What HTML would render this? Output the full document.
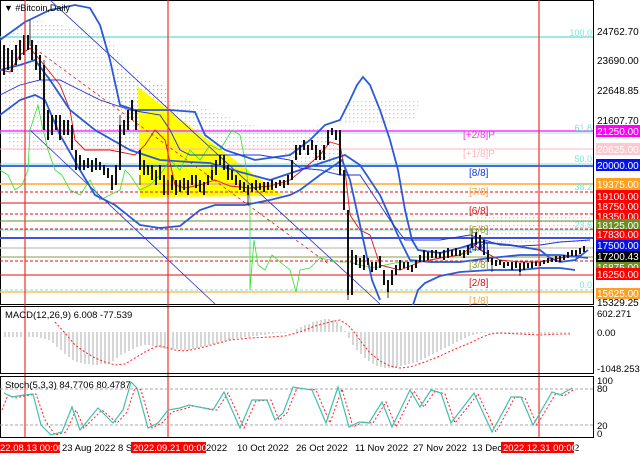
<!DOCTYPE html>
<html><head><meta charset="utf-8"><style>
html,body{margin:0;padding:0;background:#fff;}
svg{display:block;font-family:"Liberation Sans",sans-serif;}
</style></head><body>
<svg width="640" height="457" viewBox="0 0 640 457" xmlns="http://www.w3.org/2000/svg">
<defs>
<pattern id="pk" width="4" height="4" patternUnits="userSpaceOnUse"><rect x="1" y="1" width="1.2" height="1.2" fill="#d9a6c8"/></pattern>
<pattern id="or" width="4" height="4" patternUnits="userSpaceOnUse"><rect x="1" y="1" width="1.2" height="1.2" fill="#f0a060"/></pattern>
</defs>
<rect width="640" height="457" fill="#fff"/>
<!-- main panel -->
<rect x="0.5" y="0.5" width="593" height="304" fill="#fff" stroke="#000"/>
<!-- cloud -->
<path d="M0,60 L10,30 L35,20 L60,25 L90,30 L110,35 L130,75 L150,105 L190,100 L210,110 L250,125 L290,130 L320,125 L340,150 L345,175 L300,170 L280,150 L250,150 L200,150 L150,150 L120,150 L60,150 L10,150 Z" fill="url(#pk)" opacity="0.8"/>
<path d="M85,95 L120,65 L145,80 L165,85 L175,115 L185,125 L160,130 L150,145 L100,150 L85,130 Z" fill="url(#or)"/>
<path d="M345,100 L420,100 L415,120 L345,125 Z" fill="url(#pk)" opacity="0.7"/>
<path d="M475,213 L590,213 L590,245 L475,245 Z" fill="url(#pk)" opacity="0.7"/>
<!-- yellow triangle -->
<polygon points="138,87 252,173 283,196 140,197" fill="#ffff00"/>
<!-- horizontal levels -->
<g stroke-width="1">
<line x1="0" y1="37" x2="593" y2="37" stroke="#7fe3da" stroke-width="1.5"/>
<line x1="0" y1="131" x2="593" y2="131" stroke="#ff33ff" stroke-width="1.5"/>
<line x1="0" y1="133" x2="593" y2="133" stroke="#9ee8e0"/>
<line x1="0" y1="149" x2="593" y2="149" stroke="#ffb6c1"/>
<line x1="0" y1="164" x2="593" y2="164" stroke="#7fe3da"/>
<line x1="0" y1="166" x2="593" y2="166" stroke="#1030e0" stroke-width="1.5"/>
<line x1="0" y1="184" x2="593" y2="184" stroke="#ffbf60" stroke-width="2"/>
<line x1="0" y1="192" x2="593" y2="192" stroke="#e01010" stroke-dasharray="3,2"/>
<line x1="0" y1="203" x2="593" y2="203" stroke="#e01010"/>
<line x1="0" y1="214" x2="593" y2="214" stroke="#e01010" stroke-dasharray="3,2"/>
<line x1="0" y1="221" x2="593" y2="221" stroke="#6b8e23"/>
<line x1="0" y1="229" x2="593" y2="229" stroke="#e01010" stroke-dasharray="3,2"/>
<line x1="0" y1="230" x2="593" y2="230" stroke="#7fe3da"/>
<line x1="0" y1="238" x2="593" y2="238" stroke="#4050e0" stroke-width="2"/>
<line x1="0" y1="248" x2="593" y2="248" stroke="#cccccc" stroke-width="1.5"/>
<line x1="0" y1="257" x2="593" y2="257" stroke="#8a9a50"/>
<line x1="0" y1="261" x2="593" y2="261" stroke="#e01010" stroke-dasharray="3,2"/>
<line x1="0" y1="275" x2="593" y2="275" stroke="#e01010"/>
<line x1="0" y1="290" x2="593" y2="290" stroke="#7fe3da" stroke-dasharray="3,2"/>
<line x1="0" y1="292" x2="593" y2="292" stroke="#ffbf60" stroke-width="1.5"/>
</g>
<!-- diagonal channel lines -->
<line x1="50" y1="0" x2="380" y2="304" stroke="#2030d0" stroke-width="0.8"/>
<line x1="30" y1="130" x2="215" y2="304" stroke="#2030d0" stroke-width="0.8"/>
<line x1="30" y1="45" x2="330" y2="265" stroke="#e02020" stroke-width="0.8" stroke-dasharray="3,3"/>
<!-- green chikou -->
<polyline fill="none" stroke="#30e030" stroke-width="0.8" points="0,170 8,175 15,190 22,185 28,170 30,130 38,105 42,125 48,150 55,170 62,175 70,190 80,195 90,180 100,200 110,195 120,190 125,170 130,175 140,190 150,185 160,175 170,160 180,170 190,150 200,160 210,145 220,150 232,130 240,135 245,160 250,200 250,290 254,240 258,265 265,270 272,255 280,262 290,270 296,292 300,270 310,268 320,258 330,260 340,262 350,262 360,265 375,268 385,265 400,262 420,262 440,258 460,255 475,250"/>
<!-- red tenkan/kijun -->
<polyline fill="none" stroke="#e01010" stroke-width="0.9" points="0,70 10,72 20,55 30,48 40,60 60,85 70,110 75,140 85,150 110,150 120,152 135,155 145,145 155,130 165,140 175,185 185,188 200,185 215,180 230,186 250,188 270,186 290,180 300,172 320,155 330,142 340,145 345,170 350,215 360,230 370,235 380,265 400,270 420,262 440,258 460,255 475,245 480,250 500,260 520,262 540,262 560,258 580,255"/>
<!-- bollinger bands -->
<g fill="none" stroke="#2a5ad8" stroke-width="1.8">
<polyline points="0,40 25,22 50,10 75,5 90,8 100,25 110,60 120,105 135,110 170,110 195,112 205,135 225,150 255,160 290,155 310,140 325,125 340,120 350,100 357,85 363,77 370,85 380,110 390,140 398,170 405,210 412,240 418,250 440,253 460,248 480,242 510,245 540,250 550,258 560,262 575,260 588,250"/>
<polyline points="0,70 20,65 35,60 50,80 70,110 95,130 130,150 160,160 190,162 210,163 240,172 270,180 300,170 330,160 345,155 360,165 380,195 400,240 410,260 430,262 460,262 490,258 520,255 560,255 588,258"/>
<polyline points="0,115 20,100 35,95 45,100 60,135 80,170 95,195 115,205 140,225 160,228 180,226 200,210 215,205 245,205 270,200 290,195 300,190 320,175 335,165 342,160 350,180 360,225 372,280 380,300"/>
<polyline points="413,305 418,290 425,283 440,276 460,272 490,270 520,270 540,268 560,268 575,270"/>
</g>
<polyline fill="none" stroke="#2030d0" stroke-width="0.9" points="0,95 20,85 40,80 60,80 70,85 100,100 130,110 160,115 170,130 180,150 190,155 230,155 260,155 290,160 300,168 320,170 340,175 360,175 390,220 405,240 420,240 440,240 470,235 500,245 520,246 540,245 560,242 590,240"/>
<!-- candles -->
<path fill="none" stroke="#111" stroke-width="2" d="M4,45V75M8,48V70M12,50V72M16,45V65M20,40V60M24,35V55M28,35V50M32,40V60M36,45V70M40,55V80M44,65V130M48,110V140M52,115V135M56,115V130M60,115V140M64,120V135M68,120V135M72,125V150M76,150V170M80,155V170M84,160V170M88,158V168M92,160V172M96,158V170M100,162V170M104,165V175M108,168V178M112,175V190M116,165V185M120,125V170M124,120V135M128,110V130M132,100V120M136,110V130M140,150V170M144,160V175M148,165V175M152,165V180M156,170V185M160,165V180M164,175V195M168,180V195M172,175V190M176,180V195M180,180V192M184,178V190M188,180V195M192,175V185M196,175V188M200,180V192M204,182V195M208,175V185M212,170V180M216,160V175M220,155V165M224,155V170M228,165V180M232,170V180M236,175V185M240,180V190M244,182V192M248,185V195M252,183V192M256,180V190M260,183V190M264,182V192M268,182V190M272,180V190M276,182V188M280,180V186M284,180V188M288,175V185M292,160V180M296,145V160M300,145V155M304,140V150M308,145V155M312,140V150M316,145V160M320,150V160M324,145V160M328,130V145M332,128V135M336,130V140M340,130V175M344,170V210M348,210V295M352,250V295M356,255V265M360,258V268M364,255V270M368,258V265M372,262V272M376,262V270M380,256V268M384,270V285M388,280V292M392,270V285M396,265V275M400,260V270M404,262V268M408,262V270M412,265V272M416,260V268M420,255V262M424,250V262M428,252V260M432,250V258M436,250V258M440,252V258M444,250V260M448,248V258M452,250V256M456,248V256M460,250V256M464,250V258M468,245V255M472,238V248M476,232V245M480,235V250M484,240V255M488,250V262M492,258V265M496,260V266M500,260V265M504,262V268M508,262V266M512,262V270M516,262V268M520,263V272M524,262V270M528,263V268M532,262V268M536,262V266M540,262V266M544,260V264M548,258V263M552,258V262M556,256V262M560,256V262M564,255V260M568,252V258M572,250V256M576,250V256M580,248V254M584,246V252"/>
<path fill="none" stroke="#111" stroke-width="0.8" d="M30,20V45M44,60V75M120,115V125M140,175V185M168,195V205M212,165V170M248,195V205M348,295V300M388,292V298M472,230V238M492,265V272M520,272V276"/>
<!-- red vertical lines -->
<g stroke="#f03030" stroke-width="1.2">
<line x1="25" y1="0" x2="25" y2="438"/>
<line x1="168" y1="0" x2="168" y2="438"/>
<line x1="539" y1="0" x2="539" y2="438"/>
</g>
<!-- title -->
<text x="4" y="11" font-size="9" fill="#000">▼ #Bitcoin,Daily</text>
<!-- murray labels -->
<g font-size="10">
<text x="463" y="138" fill="#ff33ff">[+2/8]P</text>
<text x="463" y="157" fill="#ffb6c1">[+1/8]P</text>
<text x="469" y="176" fill="#1030e0">[8/8]</text>
<text x="469" y="195" fill="#ffa030">[7/8]</text>
<text x="469" y="214" fill="#e01010">[6/8]</text>
<text x="469" y="233" fill="#8a9a30">[5/8]</text>
<text x="469" y="251" fill="#1030e0">[4/8]</text>
<text x="469" y="268" fill="#8a9a30">[3/8]</text>
<text x="469" y="286" fill="#e01010">[2/8]</text>
<text x="469" y="304" fill="#ffa030">[1/8]</text>
</g>
<g font-size="9" fill="#7fe3da" text-anchor="end">
<text x="592" y="36">100.0</text>
<text x="592" y="131">61.8</text>
<text x="592" y="162">50.0</text>
<text x="592" y="190">38.2</text>
<text x="592" y="228">23.6</text>
<text x="592" y="288">0.0</text>
</g>
<!-- right axis -->
<g font-size="10" fill="#000">
<text x="597" y="35">24762.70</text>
<text x="597" y="64">23690.00</text>
<text x="597" y="94">22648.85</text>
<text x="597" y="124">21607.70</text>
<text x="597" y="306">15329.25</text>
</g>
<g font-size="10">
<rect x="596" y="125" width="44" height="12" fill="#ff00ff"/><text x="597" y="135" fill="#fff">21250.00</text>
<rect x="596" y="143" width="44" height="12" fill="#ffc8d0"/><text x="597" y="153" fill="#fff">20625.00</text>
<rect x="596" y="159" width="44" height="12" fill="#0010f0"/><text x="597" y="169" fill="#fff">20000.00</text>
<rect x="596" y="178" width="44" height="12" fill="#ffa020"/><text x="597" y="188" fill="#fff">19375.00</text>
<rect x="596" y="190" width="44" height="12" fill="#ff0000"/><text x="597" y="200" fill="#fff">19100.00</text>
<rect x="596" y="200" width="44" height="12" fill="#ff0000"/><text x="597" y="210" fill="#fff">18750.00</text>
<rect x="596" y="210" width="44" height="12" fill="#ff0000"/><text x="597" y="220" fill="#fff">18350.00</text>
<rect x="596" y="219" width="44" height="12" fill="#6b8e23"/><text x="597" y="229" fill="#fff">18125.00</text>
<rect x="596" y="229" width="44" height="11" fill="#ff0000"/><text x="597" y="238" fill="#fff">17830.00</text>
<rect x="596" y="240" width="44" height="11" fill="#0010f0"/><text x="597" y="249" fill="#fff">17500.00</text>
<rect x="596" y="251" width="44" height="11" fill="#000"/><text x="597" y="260" fill="#fff">17200.43</text>
<rect x="596" y="262" width="44" height="11" fill="#6b8e23"/><text x="597" y="271" fill="#fff">16875.00</text>
<rect x="596" y="273" width="44" height="5" fill="#ff0000"/>
<rect x="596" y="268" width="44" height="1" fill="#ff0000"/>
<rect x="596" y="268" width="44" height="12" fill="#ff0000"/><text x="597" y="278" fill="#fff">16250.00</text>
<rect x="596" y="288" width="44" height="11" fill="#ffa020"/><text x="597" y="297" fill="#fff">15625.00</text>
</g>
<!-- MACD panel -->
<rect x="0.5" y="306.5" width="593" height="67" fill="none" stroke="#000"/>
<path fill="none" stroke="#bbb" stroke-width="1.2" d="M5,332V337M9,332V337M13,332V337M17,332V337M21,332V337M29,332V337M33,332V337M37,332V337M41,332V338M45,332V339M49,332V340M53,332V343M57,332V347M61,332V350M65,332V354M69,332V357M73,332V360M77,332V362M81,332V363M85,332V364M89,332V364M93,332V365M97,332V365M101,332V364M105,332V364M109,332V363M113,332V361M117,332V358M121,332V355M125,332V353M129,332V351M133,332V349M137,332V347M141,332V346M145,332V345M149,332V345M153,332V346M157,332V347M161,332V348M165,332V349M173,332V349M177,332V349M181,332V350M185,332V350M189,332V350M193,332V349M197,332V348M201,332V347M205,332V346M209,332V345M213,332V344M217,332V343M221,332V342M225,332V341M229,332V340M233,332V339M237,332V338M241,332V338M245,332V337M249,332V337M253,332V336M257,332V336M261,332V335M265,332V335M269,332V334M273,332V334M277,332V333M281,332V333M285,332V333M289,332V332M297,332V329M301,332V327M305,332V325M309,332V324M313,332V322M317,332V321M321,332V320M325,332V319M329,332V319M333,332V320M337,332V322M341,332V326M345,332V331M349,332V338M353,332V345M357,332V350M361,332V354M365,332V358M369,332V361M373,332V364M377,332V366M381,332V367M385,332V368M389,332V368M393,332V368M397,332V367M401,332V366M405,332V365M409,332V364M413,332V363M417,332V362M421,332V360M425,332V358M429,332V356M433,332V354M437,332V352M441,332V350M445,332V348M449,332V346M453,332V344M457,332V342M461,332V340M465,332V338M469,332V336M473,332V335M477,332V334M481,332V333M485,332V333M493,332V333M497,332V333M501,332V333M505,332V333M509,332V334M513,332V334M517,332V334M521,332V334M525,332V334M529,332V334M533,332V334M541,332V334M545,332V334M549,332V334M553,332V334M557,332V333M561,332V333M565,332V333M569,332V333"/>
<polyline fill="none" stroke="#ff2020" stroke-width="1" stroke-dasharray="2,2" points="55,322 65,333 75,345 85,352 95,358 105,362 115,365 125,364 135,358 145,352 155,347 160,346 168,348 175,350 185,351 200,348 215,344 230,340 250,338 270,337 285,336 300,332 315,326 330,322 340,320 348,325 355,333 362,343 370,353 380,361 390,366 400,368 410,367 425,362 440,356 455,349 470,343 480,338 490,334 500,333 520,334 540,335 560,334 570,334"/>
<text x="5" y="318" font-size="9.5" fill="#000">MACD(12,26,9) 6.008 -77.539</text>
<g font-size="9.5" fill="#000">
<text x="597" y="317">602.271</text>
<text x="597" y="336">0.00</text>
<text x="597" y="372">-1048.253</text>
</g>
<!-- Stoch panel -->
<rect x="0.5" y="376.5" width="593" height="61" fill="none" stroke="#000"/>
<line x1="0" y1="389" x2="593" y2="389" stroke="#aaa" stroke-dasharray="3,2"/>
<line x1="0" y1="425" x2="593" y2="425" stroke="#aaa" stroke-dasharray="3,2"/>
<polyline fill="none" stroke="#ff2020" stroke-width="1" stroke-dasharray="2,2" points="2,410 8,395 16,398 24,396 36,394 45,420 55,435 66,432 76,410 84,428 102,410 117,423 127,412 135,388 141,390 152,428 162,423 172,412 184,409 193,406 217,410 228,393 244,428 256,401 271,400 279,420 287,413 297,388 316,390 330,423 342,389 353,427 363,422 373,423 386,402 396,427 414,391 424,407 435,391 445,394 455,423 478,394 496,432 515,397 525,398 537,425 556,393 564,396 573,390"/>
<polyline fill="none" stroke="#40c0b0" stroke-width="1.2" points="4,393 12,397 24,395 33,394 41,425 51,435 62,432 72,407 80,430 98,408 113,423 123,410 131,382 137,388 148,428 158,423 168,410 180,408 189,405 213,410 224,392 240,428 252,400 267,400 275,420 283,413 293,387 312,390 326,423 338,387 349,427 359,422 369,423 382,402 392,427 410,390 420,407 431,390 441,393 451,423 474,393 492,432 511,397 521,397 533,425 552,392 560,395 572,388"/>
<text x="5" y="388" font-size="9.5" fill="#000">Stoch(5,3,3) 84.7706 80.4787</text>
<g font-size="9.5" fill="#000">
<text x="597" y="384">100</text>
<text x="597" y="392">80</text>
<text x="597" y="429">20</text>
<text x="597" y="437">0</text>
</g>
<!-- date axis -->
<g font-size="9.5" fill="#000">
<text x="62" y="451">23 Aug 2022</text>
<text x="118" y="451">8 S</text>
<text x="206" y="451">2022</text>
<text x="237" y="451">10 Oct 2022</text>
<text x="296" y="451">26 Oct 2022</text>
<text x="355" y="451">11 Nov 2022</text>
<text x="413" y="451">27 Nov 2022</text>
<text x="472" y="451">13 Dec</text>
<text x="574" y="451">2</text>
</g>
<g font-size="9.5">
<rect x="0" y="442" width="60" height="11" fill="#ff0000"/><text x="0" y="451" fill="#fff">22.08.13 00:00</text>
<rect x="131" y="442" width="75" height="11" fill="#ff0000"/><text x="133" y="451" fill="#fff">2022.09.21 00:00</text>
<rect x="501" y="442" width="73" height="11" fill="#ff0000"/><text x="503" y="451" fill="#fff">2022.12.31 00:00</text>
</g>
</svg>
</body></html>
